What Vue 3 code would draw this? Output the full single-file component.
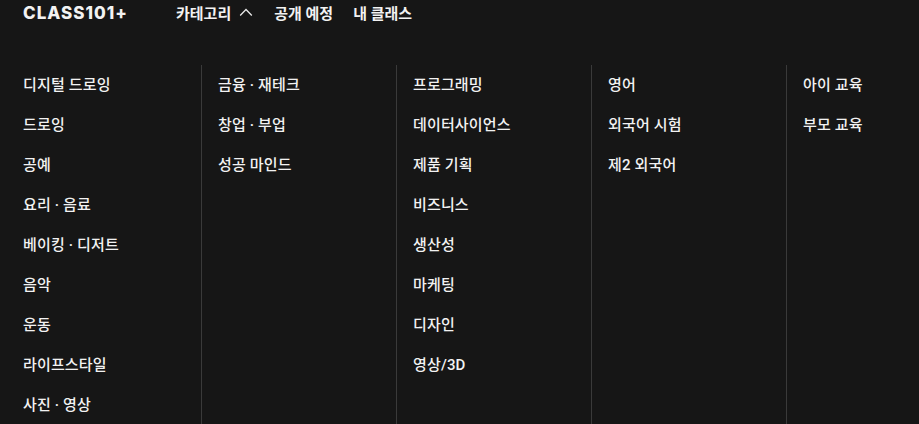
<template>
  <div class="page">
    <header class="topbar">
      <div class="logo">CLASS101+</div>
      <nav class="nav">
        <a class="nav-item">
          카테고리
          <svg class="chevron" width="15" height="14" viewBox="0 0 15 14" fill="none">
            <path d="M1.2 10.5L7 4.5L12.8 10.5" stroke="#e8e8e8" stroke-width="1.3" />
          </svg>
        </a>
        <a class="nav-item">공개 예정</a>
        <a class="nav-item">내 클래스</a>
      </nav>
    </header>
    <div class="menu">
      <ul v-for="(col, i) in columns" :key="i" class="column">
        <li v-for="item in col" :key="item" class="item">{{ item }}</li>
      </ul>
    </div>
  </div>
</template>

<script setup>
const columns = [
  ['디지털 드로잉', '드로잉', '공예', '요리 · 음료', '베이킹 · 디저트', '음악', '운동', '라이프스타일', '사진 · 영상'],
  ['금융 · 재테크', '창업 · 부업', '성공 마인드'],
  ['프로그래밍', '데이터사이언스', '제품 기획', '비즈니스', '생산성', '마케팅', '디자인', '영상/3D'],
  ['영어', '외국어 시험', '제2 외국어'],
  ['아이 교육', '부모 교육']
]
</script>

<style scoped>
.page {
  width: 919px;
  height: 424px;
  overflow: hidden;
  background: #161616;
  color: #f2f2f2;
  font-family: Roboto, "Noto Sans CJK KR", sans-serif;
}
.topbar {
  display: flex;
  align-items: center;
  height: 25px;
  padding-left: 23px;
}
.logo {
  width: 153px;
  flex: none;
  font-family: Inter, sans-serif;
  font-size: 17px;
  font-weight: 800;
  letter-spacing: 1px;
}
.nav {
  display: flex;
  gap: 20px;
  padding-bottom: 1px;
}
.nav-item {
  display: flex;
  align-items: center;
  gap: 8px;
  font-size: 15px;
  font-weight: 700;
}
.menu {
  display: flex;
  margin-top: 40px;
  padding-left: 23px;
}
.column {
  flex: none;
  width: 195px;
  height: 380px;
  margin: 0;
  padding: 0 0 0 16px;
  border-left: 1px solid #3a3a3a;
  box-sizing: border-box;
  list-style: none;
}
.column:first-child {
  width: 178px;
  padding-left: 0;
  border-left: none;
}
.item {
  display: flex;
  align-items: center;
  box-sizing: border-box;
  height: 40px;
  padding-bottom: 4px;
  font-size: 15px;
  font-weight: 500;
  letter-spacing: 0.15px;
}
</style>

<style>
html, body {
  background: #161616;
}
</style>
